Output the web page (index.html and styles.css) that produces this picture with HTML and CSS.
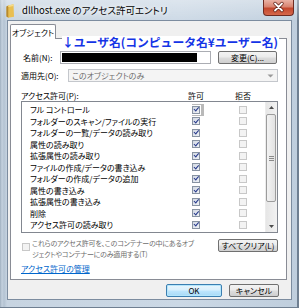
FILE: index.html
```html
<!DOCTYPE html>
<html lang="ja">
<head>
  <meta charset="UTF-8">
  <meta name="viewport" content="width=device-width, initial-scale=1.0">
  <title>dllhost.exe のアクセス許可エントリ</title>
  <link rel="stylesheet" href="styles.css">
</head>
<body>
  <div class="window">
    <div class="titlebar">
      <svg class="app-icon" width="8" height="14" viewBox="0 0 8 14">
        <path d="M2 1.5 L7.5 0.3 L8 12.8 L2 13.8 Z" fill="#e9bf52"/>
        <path d="M0.3 2.5 L2.3 1.4 L2.3 13.8 L0.3 12.6 Z" fill="#b88a2c"/>
        <path d="M2.3 1.4 L7.5 0.3 L7.6 2 L2.3 3 Z" fill="#f6dc8a"/>
      </svg>
      <span class="title">dllhost.exe のアクセス許可エントリ</span>
      <div class="close">
        <svg width="31" height="16" viewBox="0 0 31 16">
          <path d="M12 4.5 L19 11.5 M19 4.5 L12 11.5" stroke="#5a1a10" stroke-width="3.2" stroke-linecap="round"/>
          <path d="M12 4.5 L19 11.5 M19 4.5 L12 11.5" stroke="#fff" stroke-width="1.8" stroke-linecap="round"/>
        </svg>
      </div>
    </div>

    <div class="client">
      <div class="tab">オブジェクト</div>
      <div class="panel">
        <div class="note">↓ユーザ名(コンピュータ名¥ユーザー名)</div>

        <div class="field-row">
          <span class="label label-name">名前(N):</span>
          <div class="textbox"><div class="redact"></div></div>
          <button class="btn btn-change">変更(C)...</button>
        </div>

        <div class="field-row field-apply">
          <span class="label label-apply">適用先(O):</span>
          <div class="combo">
            <span class="combo-text">このオブジェクトのみ</span>
            <svg width="7" height="4" viewBox="0 0 7 4"><path d="M0.5 0.5 L6.5 0.5 L3.5 3.5 Z" fill="#9a9a9a"/></svg>
          </div>
        </div>

        <div class="perm-head">
          <span class="perm-label">アクセス許可(P):</span>
          <span class="col">許可</span>
          <span class="col">拒否</span>
        </div>

        <div class="perm-list">
          <ul class="perm-rows">
            <li><span class="perm-name">フル コントロール</span><span class="cell"><i class="cb on focus"></i></span><span class="cell"><i class="cb off"></i></span></li>
            <li><span class="perm-name">フォルダーのスキャン/ファイルの実行</span><span class="cell"><i class="cb on"></i></span><span class="cell"><i class="cb off"></i></span></li>
            <li><span class="perm-name">フォルダーの一覧/データの読み取り</span><span class="cell"><i class="cb on"></i></span><span class="cell"><i class="cb off"></i></span></li>
            <li><span class="perm-name">属性の読み取り</span><span class="cell"><i class="cb on"></i></span><span class="cell"><i class="cb off"></i></span></li>
            <li><span class="perm-name">拡張属性の読み取り</span><span class="cell"><i class="cb on"></i></span><span class="cell"><i class="cb off"></i></span></li>
            <li><span class="perm-name">ファイルの作成/データの書き込み</span><span class="cell"><i class="cb on"></i></span><span class="cell"><i class="cb off"></i></span></li>
            <li><span class="perm-name">フォルダーの作成/データの追加</span><span class="cell"><i class="cb on"></i></span><span class="cell"><i class="cb off"></i></span></li>
            <li><span class="perm-name">属性の書き込み</span><span class="cell"><i class="cb on"></i></span><span class="cell"><i class="cb off"></i></span></li>
            <li><span class="perm-name">拡張属性の書き込み</span><span class="cell"><i class="cb on"></i></span><span class="cell"><i class="cb off"></i></span></li>
            <li><span class="perm-name">削除</span><span class="cell"><i class="cb on"></i></span><span class="cell"><i class="cb off"></i></span></li>
            <li><span class="perm-name">アクセス許可の読み取り</span><span class="cell"><i class="cb on"></i></span><span class="cell"><i class="cb off"></i></span></li>
          </ul>
          <div class="scrollbar">
            <div class="sb-btn">
              <svg width="5" height="3" viewBox="0 0 5 3"><path d="M0 3 L5 3 L2.5 0 Z" fill="#4d4d4d"/></svg>
            </div>
            <div class="sb-thumb"><span class="grip"></span></div>
            <div class="sb-space"></div>
            <div class="sb-btn">
              <svg width="5" height="3" viewBox="0 0 5 3"><path d="M0 0 L5 0 L2.5 3 Z" fill="#4d4d4d"/></svg>
            </div>
          </div>
        </div>

        <div class="inherit-row">
          <i class="cb off inherit-cb"></i>
          <p class="inherit-text">これらのアクセス許可を、このコンテナーの中にあるオブ<br>ジェクトやコンテナーにのみ適用する(T)</p>
          <button class="btn btn-clear">すべてクリア(L)</button>
        </div>

        <a class="manage" href="#">アクセス許可の管理</a>
      </div>

      <div class="footer">
        <button class="btn btn-default btn-ok">OK</button>
        <button class="btn btn-cancel">キャンセル</button>
      </div>
    </div>
  </div>
</body>
</html>
```

FILE: styles.css
```css
html, body {
margin: 0;
padding: 0;
}

body {
width: 299px;
height: 308px;
overflow: hidden;
font-family: "Noto Sans CJK JP", "Noto Sans", sans-serif;
font-size: 8px;
font-feature-settings: "palt";
color: #000;
}

.window {
width: 299px;
height: 308px;
box-sizing: border-box;
padding: 0 7px 8px 7px;
display: flex;
flex-direction: column;
background: linear-gradient(to right, #9fafbf 0px, #c4d1de 2px, #b4c3d2 4px, #c7d4e1 7px, #cbd8e5 60%, #bfcedd 100%);
box-shadow: inset -3px -2px 0 -1px #6f7f91;
}

/* title bar */
.titlebar {
position: relative;
flex: none;
height: 20px;
margin: 0 -7px;
padding-left: 6px;
display: flex;
align-items: center;
gap: 8px;
background: linear-gradient(to bottom, rgba(255,255,255,0.35), rgba(255,255,255,0.05));
}

.app-icon {
flex: none;
margin-top: 1px;
}

.title {
font-size: 9.5px;
line-height: 20px;
text-shadow: 0 0 4px #fff, 0 0 7px #fff;
}

.close {
position: absolute;
top: 0;
right: 5px;
width: 31px;
height: 16px;
box-sizing: border-box;
border: 1px solid #6e2b22;
border-top: none;
border-radius: 0 0 4px 4px;
background: linear-gradient(to bottom, #eab2a5 0%, #d98470 45%, #c4472d 55%, #d5684c 100%);
}

.close svg {
display: block;
margin: -1px 0 0 -1px;
}

/* client area */
.client {
flex: 1;
display: flex;
flex-direction: column;
border: 1px solid #7c8c9f;
background: #f0f0f0;
padding: 3px 4px 0 2px;
}

.tab {
position: relative;
z-index: 1;
align-self: flex-start;
width: 46px;
height: 15px;
box-sizing: border-box;
margin-bottom: -1px;
border: 1px solid #898c95;
border-bottom: none;
border-radius: 2px 2px 0 0;
background: #fff;
display: flex;
align-items: center;
justify-content: center;
}

.panel {
position: relative;
flex: none;
height: 242px;
box-sizing: border-box;
border: 1px solid #898c95;
background: #fff;
padding: 12px 8px 0 10px;
display: flex;
flex-direction: column;
}

.note {
position: absolute;
top: -3px;
left: 51px;
width: 217px;
height: 12px;
background: #fff;
color: #1434e6;
font-weight: bold;
font-size: 11.8px;
line-height: 12px;
font-feature-settings: normal;
white-space: nowrap;
}

.field-row {
height: 13px;
display: flex;
align-items: center;
}

.field-apply {
margin-top: 5px;
}

.label {
flex: none;
box-sizing: border-box;
}

.label-name {
width: 39px;
padding-left: 2px;
}

.label-apply {
width: 47px;
}

.textbox {
width: 151px;
height: 13px;
box-sizing: border-box;
border: 1px solid #abadb3;
padding: 1px;
}

.redact {
width: 135px;
height: 100%;
background: #000;
}

.btn {
display: flex;
align-items: center;
justify-content: center;
height: 13px;
box-sizing: border-box;
padding: 0;
border: 1px solid #707070;
border-radius: 2px;
background: linear-gradient(to bottom, #f3f3f3 0%, #ebebeb 48%, #dddddd 52%, #cfcfcf 100%);
font-family: inherit;
font-size: 8px;
font-feature-settings: "palt";
color: #000;
}

.btn-change {
width: 59px;
margin-left: 7px;
}

.combo {
width: 210px;
height: 13px;
box-sizing: border-box;
border: 1px solid #c4c7cc;
background: #f4f4f4;
display: flex;
align-items: center;
justify-content: space-between;
padding: 0 3px 0 3px;
color: #6d6d6d;
}

.perm-head {
margin-top: 7px;
height: 12px;
display: flex;
align-items: center;
padding-right: 25px;
}

.perm-label {
flex: 1;
}

.col {
width: 20px;
text-align: center;
}

.col + .col {
margin-left: 27px;
}

/* permission list */
.perm-list {
height: 132px;
box-sizing: border-box;
border: 1px solid #828790;
display: flex;
}

.perm-rows {
flex: 1;
list-style: none;
margin: 0;
padding: 2px 12px 0 0;
}

.perm-rows li {
height: 11.5px;
display: flex;
align-items: center;
}

.perm-name {
flex: 1;
padding-left: 8px;
white-space: nowrap;
}

.cell {
width: 20px;
display: flex;
justify-content: center;
}

.cell + .cell {
margin-left: 27px;
}

.cb {
display: block;
position: relative;
width: 8px;
height: 8px;
box-sizing: border-box;
border: 1px solid #8893a2;
background: linear-gradient(135deg, #d3d9e3, #eef1f5);
}

.cb.on::after {
content: "";
position: absolute;
left: 1.6px;
top: -0.4px;
width: 1.6px;
height: 3.6px;
border: solid #26398c;
border-width: 0 1.3px 1.3px 0;
transform: rotate(40deg);
}

.cb.focus {
box-shadow: 0 0 0 1px #fff, 2px 0 0 2px #b9b9b9;
}

.cb.off {
border-color: #c8c8c8;
background: #f3f3f3;
}

.scrollbar {
width: 12px;
flex: none;
display: flex;
flex-direction: column;
background: linear-gradient(to right, #e6e6e6, #f2f2f2);
border-left: 1px solid #ececec;
box-sizing: border-box;
}

.sb-btn {
height: 11px;
display: flex;
align-items: center;
justify-content: center;
}

.sb-thumb {
height: 88px;
margin: 1px 1px 0 0;
box-sizing: border-box;
border: 1px solid #9c9c9c;
border-radius: 2px;
background: linear-gradient(to right, #f3f3f3, #e2e2e2);
display: flex;
align-items: center;
justify-content: center;
}

.grip {
width: 5px;
height: 5px;
background: repeating-linear-gradient(to bottom, #8a8a8a 0, #8a8a8a 1px, transparent 1px, transparent 2px);
}

.sb-space {
flex: 1;
}

/* inherit row */
.inherit-row {
margin-top: 5px;
display: flex;
align-items: flex-start;
}

.inherit-cb {
flex: none;
margin: 5px 0 0 1px;
}

.inherit-text {
margin: 0 0 0 2px;
font-size: 7px;
letter-spacing: -0.2px;
line-height: 10.5px;
color: #6d6d6d;
white-space: nowrap;
}

.btn-clear {
flex: none;
width: 60px;
margin-top: 1px;
margin-left: auto;
}

.manage {
align-self: flex-start;
margin-top: 5px;
line-height: 10px;
color: #0066cc;
text-decoration: underline;
}

/* bottom buttons */
.footer {
margin-top: 4px;
display: flex;
justify-content: flex-end;
gap: 7px;
padding-right: 8px;
}

.btn-ok {
width: 56px;
}

.btn-cancel {
width: 50px;
}

.btn-default {
border-color: #3c7fb1;
background: linear-gradient(to bottom, #eaf6fd 0%, #d9f0fc 48%, #bee6fd 52%, #a7d9f5 100%);
box-shadow: inset 0 0 0 1px #b5e6fb;
}
```
